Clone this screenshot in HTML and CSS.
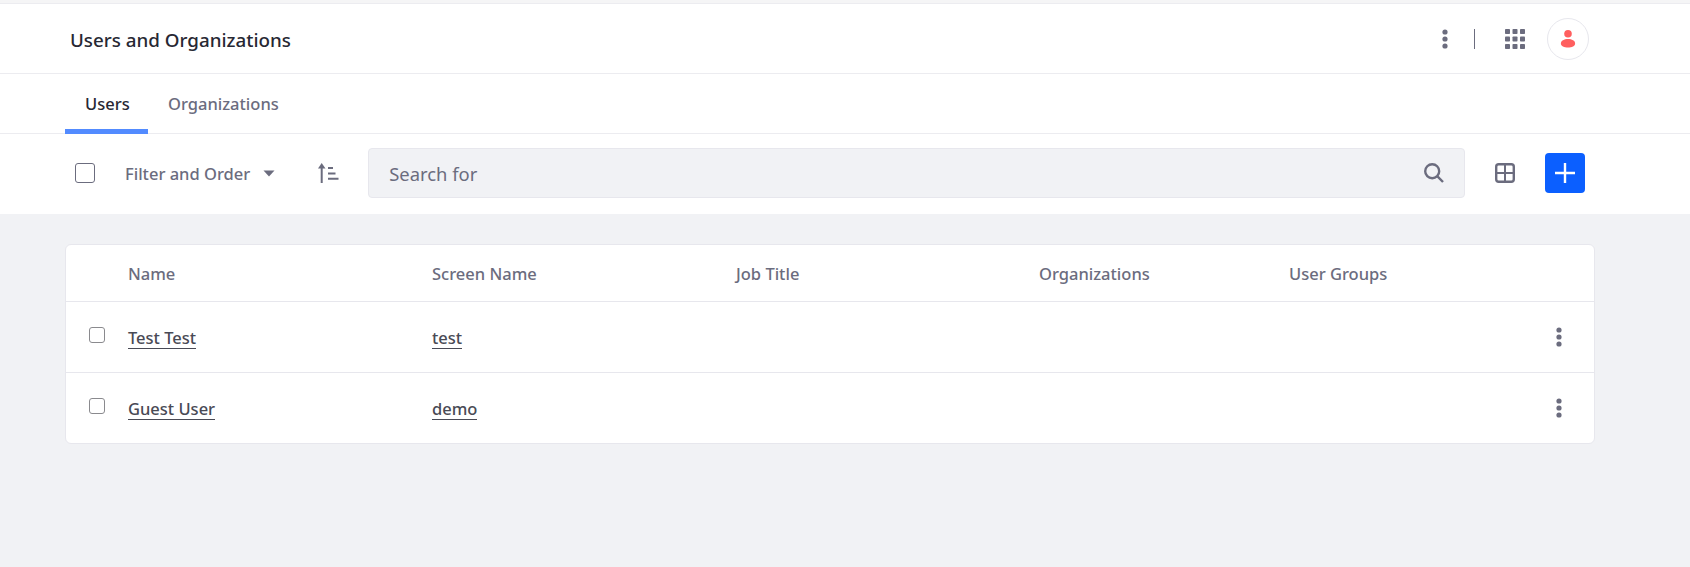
FILE: index.html
```html
<!DOCTYPE html>
<html lang="en">
<head>
<meta charset="utf-8">
<title>Users and Organizations</title>
<link rel="stylesheet" href="styles.css">
</head>
<body>
<div class="strip"></div>
<header class="topbar">
  <h1 class="title">Users and Organizations</h1>
  <div class="top-actions">
    <svg class="icon dots-top" viewBox="0 0 6 20"><circle cx="3" cy="3" r="2.600"/><circle cx="3" cy="10" r="2.600"/><circle cx="3" cy="17" r="2.600"/></svg>
    <span class="divider"></span>
    <svg class="icon apps" viewBox="0 0 20 20"><rect x="0" y="0" width="5" height="5" rx=".8"/><rect x="7.500" y="0" width="5" height="5" rx=".8"/><rect x="15" y="0" width="5" height="5" rx=".8"/><rect x="0" y="7.500" width="5" height="5" rx=".8"/><rect x="7.500" y="7.500" width="5" height="5" rx=".8"/><rect x="15" y="7.500" width="5" height="5" rx=".8"/><rect x="0" y="15" width="5" height="5" rx=".8"/><rect x="7.500" y="15" width="5" height="5" rx=".8"/><rect x="15" y="15" width="5" height="5" rx=".8"/></svg>
    <span class="avatar">
      <svg class="avatar-icon" viewBox="0 0 16 20"><circle cx="8" cy="5" r="4"/><path d="M0.500 15.500C0.500 12 4 10.500 8 10.500S15.500 12 15.500 15.500C15.500 18 12 19.500 8 19.500S0.500 18 0.500 15.500Z"/></svg>
    </span>
  </div>
</header>

<nav class="tabs">
  <a class="tab tab-active">Users</a>
  <a class="tab">Organizations</a>
</nav>

<section class="toolbar">
  <span class="check check-lg"></span>
  <span class="filter">Filter and Order</span>
  <svg class="caret" viewBox="0 0 12 7"><path d="M0.500 0.500H11.500L6 6.500Z"/></svg>
  <svg class="icon sort" viewBox="0 0 21 20"><path d="M3.700 0L7.500 5.500H0Z"/><path class="stroke" d="M3.700 20V3"/><path class="stroke" d="M10 5H15M10 10.500H17.500M10 15.800H20.500"/></svg>
  <div class="search">
    <span class="search-text">Search for</span>
    <svg class="search-icon" viewBox="0 0 20 20"><circle class="stroke bold" cx="8.200" cy="8.200" r="7"/><path class="stroke bold" d="M13.200 13.200L19 19"/></svg>
  </div>
  <svg class="icon view" viewBox="0 0 20 20"><rect class="stroke bold" x="1.200" y="1.200" width="17.600" height="17.600" rx="2.500"/><path class="stroke" d="M10 1V19M1 10H19"/></svg>
  <button class="add"><svg class="plus" viewBox="0 0 20 20"><path d="M10 0V20M0 10H20"/></svg></button>
</section>

<main class="content">
  <div class="card">
    <div class="row row-head">
      <span></span>
      <span>Name</span>
      <span>Screen Name</span>
      <span>Job Title</span>
      <span>Organizations</span>
      <span>User Groups</span>
      <span></span>
    </div>
    <div class="row">
      <span class="check"></span>
      <span class="cell-link"><a class="link">Test Test</a></span>
      <span class="cell-link"><a class="link">test</a></span>
      <span></span>
      <span></span>
      <span></span>
      <svg class="icon dots-row" viewBox="0 0 6 20"><circle cx="3" cy="3" r="2.600"/><circle cx="3" cy="10" r="2.600"/><circle cx="3" cy="17" r="2.600"/></svg>
    </div>
    <div class="row">
      <span class="check"></span>
      <span class="cell-link"><a class="link">Guest User</a></span>
      <span class="cell-link"><a class="link">demo</a></span>
      <span></span>
      <span></span>
      <span></span>
      <svg class="icon dots-row" viewBox="0 0 6 20"><circle cx="3" cy="3" r="2.600"/><circle cx="3" cy="10" r="2.600"/><circle cx="3" cy="17" r="2.600"/></svg>
    </div>
  </div>
</main>
</body>
</html>
```
FILE: styles.css
```css
* { box-sizing: border-box; }
html, body { height: 100%; }
body {
  margin: 0;
  background: #f1f2f5;
  font-family: "Noto Sans", "Open Sans", sans-serif;
  font-weight: 500;
  font-size: 16.500px;
  color: #6b6c7e;
  overflow: hidden;
}
.strip { height: 3px; background: #f5f5f6; }
.icon { fill: #6b6c7e; display: block; flex: none; }
.stroke { fill: none; stroke: #6b6c7e; stroke-width: 2; }
.bold { stroke-width: 2.400; }

.topbar {
  height: 71px;
  background: #fff;
  border-top: 1px solid #ececf0;
  border-bottom: 1px solid #ececf0;
  display: flex;
  align-items: center;
  padding-left: 70px;
  padding-right: 101px;
}
.title { margin: 2px 0 0; font-size: 18.800px; font-weight: 500; color: #272833; }
.top-actions { margin-left: auto; display: flex; align-items: center; }
.dots-top { width: 6px; height: 20px; }
.divider { width: 1px; height: 20px; background: #6b6c7e; margin-left: 26px; }
.apps { width: 20px; height: 20px; margin-left: 30px; }
.avatar {
  width: 42px; height: 42px;
  margin-left: 22px;
  border-radius: 50%;
  border: 1px solid #e7e7ed;
  display: flex; align-items: center; justify-content: center;
}
.avatar-icon { width: 16px; height: 19px; fill: #ff5f5f; }

.tabs {
  height: 60px;
  background: #fff;
  border-bottom: 1px solid #ececf0;
  display: flex;
  padding-left: 65px;
}
.tab {
  height: 60px;
  padding: 18px 20px 0;
  color: #6b6c7e;
  line-height: 24px;
}
.tab-active {
  width: 83px;
  padding-left: 20px;
  color: #272833;
  border-bottom: 5px solid #528bff;
}

.toolbar {
  height: 80px;
  background: #fff;
  display: flex;
  align-items: center;
  padding-left: 75px;
  padding-bottom: 2px;
}
.check {
  display: block;
  width: 16px; height: 16px;
  border: 1px solid #8a8a8e;
  border-radius: 3px;
  background: #fff;
}
.check-lg { width: 20px; height: 20px; border-color: #6b6c7e; flex: none; }
.filter { margin-left: 30px; }
.caret { width: 12px; height: 7px; fill: #6b6c7e; margin-left: 13px; }
.sort { width: 21px; height: 20px; margin-left: 43px; }
.search {
  width: 1097px; height: 50px;
  margin-left: 29px;
  background: #f1f2f5;
  border: 1px solid #e7e7ed;
  border-radius: 4px;
  display: flex; align-items: center;
  padding: 0 20px 0 20px;
}
.search-text { font-weight: 400; font-size: 18.400px; color: #6b6c7e; }
.search-icon { width: 20px; height: 20px; margin-left: auto; }
.view { width: 20px; height: 20px; margin-left: 30px; }
.add {
  width: 40px; height: 40px;
  margin-left: 30px;
  padding: 0;
  border: 0;
  border-radius: 4px;
  background: #0b5fff;
  display: flex; align-items: center; justify-content: center;
}
.plus { width: 20px; height: 20px; stroke: #fff; stroke-width: 2.400; fill: none; }

.content { padding: 30px 95px 0 65px; }
.card {
  background: #fff;
  border: 1px solid #e7e7ed;
  border-radius: 6px;
}
.row {
  display: grid;
  grid-template-columns: 62px 304px 304px 303px 250px 1fr 38px;
  align-items: center;
  height: 71px;
  border-top: 1px solid #e7e7ed;
}
.row > .check { margin-left: 23px; margin-top: -4px; }
.row-head { height: 56px; border-top: 0; }
.cell-link { display: flex; padding-top: 2px; }
.link {
  line-height: 21px;
  color: #494a55;
  border-bottom: 1px solid #494a55;
}
.dots-row { width: 6px; height: 20px; margin-top: -1px; }
```
